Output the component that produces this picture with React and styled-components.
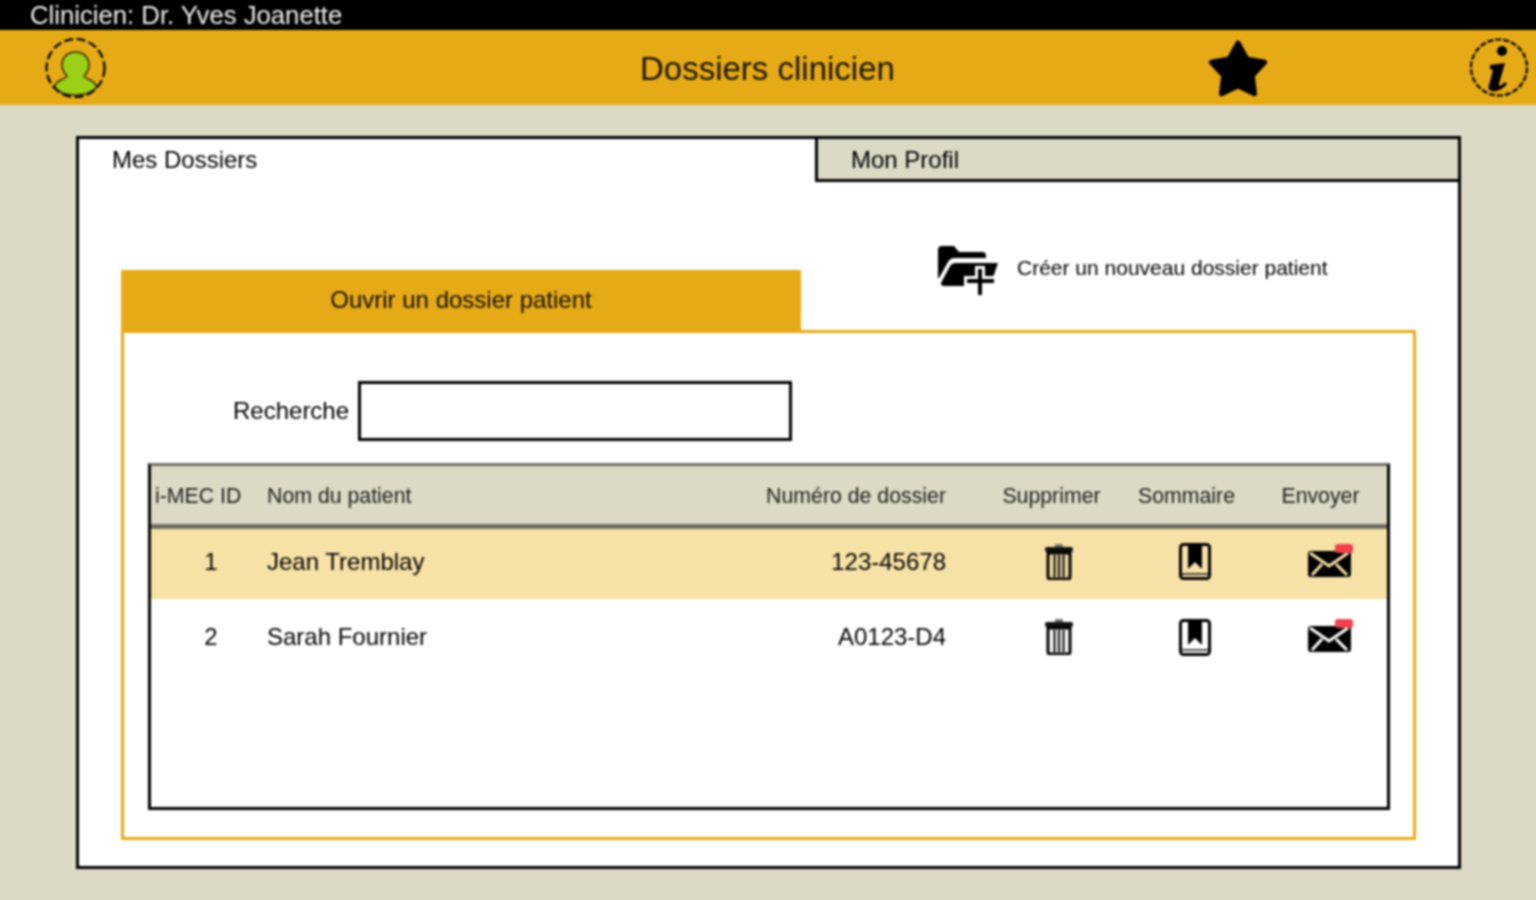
import React from "react";
import styled, { createGlobalStyle } from "styled-components";

const GlobalStyle = createGlobalStyle`
  html, body {
    margin: 0;
    padding: 0;
    background: #dcd9c6;
  }
  body {
    font-family: "Liberation Sans", Arial, sans-serif;
    color: #000;
  }
`;

const Frame = styled.div`
  width: 1536px;
  height: 900px;
  overflow: hidden;
`;

/* 10px wider than the window on each side so the blur doesn't fade at the edges */
const Page = styled.div`
  width: 1556px;
  height: 920px;
  margin: -10px;
  background: #dcd9c6;
  filter: blur(0.8px);
`;

const TopBar = styled.div`
  height: 30px;
  padding: 10px 0 0 40px;
  background: #000;
  color: #f0f0f0;
  font-size: 25.7px;
  line-height: 30px;
`;

const Header = styled.header`
  height: 75px;
  display: grid;
  grid-template-columns: 650px 568px 261px 1fr;
  align-items: center;
  background: #e6aa17;
`;

const HeaderIcon = styled.div`
  display: flex;
  align-items: center;
  height: 59px;
  padding-left: ${(p) => p.$left || 0}px;
`;

const Title = styled.h1`
  margin: 0;
  padding-top: 2px;
  font-size: 33px;
  font-weight: 400;
  color: #1a1504;
`;

const Main = styled.main`
  padding: 31px 0 0 86px;
`;

const Panel = styled.section`
  box-sizing: border-box;
  width: 1385px;
  height: 733px;
  border: 3px solid #000;
  background: #fff;
`;

const Tabs = styled.div`
  display: grid;
  grid-template-columns: 736px 1fr;
  height: 43px;
`;

const Tab = styled.div`
  box-sizing: border-box;
  display: flex;
  align-items: center;
  padding: 2px 0 0 33px;
  font-size: 24px;
  background: ${(p) => (p.$active ? "#fff" : "#dcd9c6")};
  border-left: ${(p) => (p.$active ? "none" : "3px solid #000")};
  border-bottom: 3px solid ${(p) => (p.$active ? "transparent" : "#000")};
`;

const Content = styled.div`
  padding: 63px 42px 0;
`;

const SectionTop = styled.div`
  display: flex;
  height: 85px;
`;

const SectionTab = styled.div`
  align-self: flex-end;
  width: 680px;
  height: 60px;
  display: flex;
  align-items: center;
  justify-content: center;
  background: #e6aa17;
  font-size: 24px;
  color: #141003;
`;

const CreateLink = styled.a`
  align-self: flex-start;
  display: flex;
  align-items: center;
  gap: 19px;
  margin-left: 136px;
  font-size: 21px;
  color: #000;
`;

const CreateText = styled.span`
  padding-bottom: 6px;
`;

const Box = styled.div`
  box-sizing: border-box;
  width: 1295px;
  height: 510px;
  padding: 48px 23px 0 24px;
  border: 3px solid #e6aa17;
`;

const SearchRow = styled.label`
  display: flex;
  align-items: center;
  gap: 9px;
  padding-left: 85px;
  font-size: 24px;
`;

const SearchInput = styled.input`
  box-sizing: border-box;
  width: 434px;
  height: 60px;
  border: 3px solid #000;
  border-radius: 0;
  background: #fff;
  outline: none;
`;

const Table = styled.div`
  box-sizing: border-box;
  height: 347px;
  margin-top: 22px;
  border: 3px solid #000;
  border-top-color: #6f6e62;
`;

const Row = styled.div`
  display: grid;
  grid-template-columns: 116px 433px 246px 173px 135px 133px;
  align-items: center;
`;

const HeadRow = styled(Row)`
  box-sizing: border-box;
  height: 63px;
  padding-top: 2px;
  background: #dcd9c6;
  border-bottom: 5px solid #6f6e62;
  font-size: 21.3px;
  color: #1e1e1a;
`;

const DataRow = styled(Row)`
  box-sizing: border-box;
  height: ${(p) => (p.$selected ? 70 : 76)}px;
  padding-bottom: ${(p) => (p.$selected ? 5 : 0)}px;
  background: ${(p) => (p.$selected ? "#f6e1a6" : "#fff")};
  font-size: 24px;
`;

const IdHead = styled.div`
  padding-left: 4px;
`;

const IdCell = styled.div`
  padding-left: 4px;
  text-align: center;
`;

const NumberCell = styled.div`
  text-align: right;
`;

const ActionHead = styled.div`
  padding-left: ${(p) => p.$left || 0}px;
  text-align: center;
`;

const ActionCell = styled.div`
  display: flex;
  justify-content: center;
  padding-left: ${(p) => p.$left || 0}px;
`;

function AvatarIcon() {
  return (
    <svg width="61" height="60" viewBox="0 0 61 60">
      <path
        d="M30.5 14C39 14 44 20 44 27C44 32 42 35 39 38C40 40 43 41 47 43C50 45 52 47 51 50C47 55 39 57 30.5 57C22 57 14 55 10 50C9 47 11 45 14 43C18 41 21 40 22 38C19 35 17 32 17 27C17 20 22 14 30.5 14Z"
        fill="#9bd016"
        stroke="#3a2c06"
        strokeWidth="1.6"
      />
      <circle cx="30.5" cy="30" r="29" fill="none" stroke="#000" strokeWidth="2.2" strokeDasharray="9 3.5" />
    </svg>
  );
}

function StarIcon() {
  return (
    <svg width="60" height="58" viewBox="0 0 60 58">
      <polygon
        points="30,4 38.8,19.9 56.6,23.3 44.3,36.6 46.5,54.7 30,47 13.5,54.7 15.7,36.6 3.4,23.3 21.2,19.9"
        fill="#000"
        stroke="#000"
        strokeWidth="5"
        strokeLinejoin="round"
      />
    </svg>
  );
}

function InfoIcon() {
  return (
    <svg width="60" height="59" viewBox="0 0 60 59">
      <circle cx="30" cy="29.5" r="28" fill="none" stroke="#000" strokeWidth="2.2" strokeDasharray="6 2" />
      <circle cx="33" cy="13" r="5" fill="#000" />
      <path
        d="M21 27L36 25L30 46C29.5 49 32 48 36 44L38 46C33 52 27 54 23 53C19 52 19 50 20 47L24 32L21 31Z"
        fill="#000"
      />
    </svg>
  );
}

function FolderPlusIcon() {
  return (
    <svg width="61" height="51" viewBox="0 0 61 51">
      <path d="M1 33V5Q1 1 5 1H17L22 7H45Q49 7 49 11V13H18C14 13 12 15 11 17L2 33Z" fill="#000" />
      <path d="M4 38L13 21Q15 18 19 18H61L54 38H7Q4 41 4 38Z" fill="#000" />
      <path d="M4 38H34V41H7Q4 41 4 38Z" fill="#000" />
      <path d="M43 21V51M27 36H60" stroke="#fff" strokeWidth="10" />
      <path d="M43 24V50M30 36H57" stroke="#000" strokeWidth="4" />
    </svg>
  );
}

function TrashIcon() {
  return (
    <svg width="28" height="36" viewBox="0 0 28 36">
      <rect x="10" y="0" width="8" height="4" fill="#777" />
      <rect x="0" y="3" width="28" height="5" rx="2" fill="#111" />
      <path d="M3 9H25V33Q25 35 23 35H5Q3 35 3 33Z" fill="none" stroke="#000" strokeWidth="3" />
      <path d="M9.5 11V33M14 11V33M18.5 11V33" stroke="#111" strokeWidth="2.2" />
    </svg>
  );
}

function BookIcon() {
  return (
    <svg width="32" height="37" viewBox="0 0 32 37">
      <rect x="1.5" y="1.5" width="29" height="34" rx="3" fill="none" stroke="#000" strokeWidth="3" />
      <path d="M9 2H23V26L16 19L9 26Z" fill="#000" />
      <path d="M2 31H30" stroke="#111" strokeWidth="1.5" />
    </svg>
  );
}

function MailIcon({ paper }) {
  return (
    <svg width="46" height="36" viewBox="0 0 46 36">
      <rect x="0" y="7" width="43" height="26" rx="3" fill="#000" />
      <path d="M2 9L21 22L40 9M4 31L14 20M39 31L28 20" fill="none" stroke={paper} strokeWidth="3" />
      <rect x="27" y="0" width="18" height="9" rx="3" fill="#f0404a" />
    </svg>
  );
}

function RowActions({ paper }) {
  return (
    <>
      <ActionCell $left={52}>
        <TrashIcon />
      </ActionCell>
      <ActionCell $left={16}>
        <BookIcon />
      </ActionCell>
      <ActionCell $left={21}>
        <MailIcon paper={paper} />
      </ActionCell>
    </>
  );
}

const patients = [
  { id: 1, name: "Jean Tremblay", file: "123-45678", selected: true },
  { id: 2, name: "Sarah Fournier", file: "A0123-D4", selected: false }
];

function App() {
  return (
    <Frame>
      <GlobalStyle />
      <Page>
        <TopBar>Clinicien: Dr. Yves Joanette</TopBar>
        <Header>
          <HeaderIcon $left={55}>
            <AvatarIcon />
          </HeaderIcon>
          <Title>Dossiers clinicien</Title>
          <HeaderIcon>
            <StarIcon />
          </HeaderIcon>
          <HeaderIcon>
            <InfoIcon />
          </HeaderIcon>
        </Header>
        <Main>
          <Panel>
            <Tabs>
              <Tab $active>Mes Dossiers</Tab>
              <Tab>Mon Profil</Tab>
            </Tabs>
            <Content>
              <SectionTop>
                <SectionTab>Ouvrir un dossier patient</SectionTab>
                <CreateLink>
                  <FolderPlusIcon />
                  <CreateText>Créer un nouveau dossier patient</CreateText>
                </CreateLink>
              </SectionTop>
              <Box>
                <SearchRow>
                  Recherche
                  <SearchInput type="text" />
                </SearchRow>
                <Table>
                  <HeadRow>
                    <IdHead>i-MEC ID</IdHead>
                    <div>Nom du patient</div>
                    <NumberCell>Numéro de dossier</NumberCell>
                    <ActionHead $left={38}>Supprimer</ActionHead>
                    <ActionHead>Sommaire</ActionHead>
                    <ActionHead>Envoyer</ActionHead>
                  </HeadRow>
                  {patients.map((p) => (
                    <DataRow key={p.id} $selected={p.selected}>
                      <IdCell>{p.id}</IdCell>
                      <div>{p.name}</div>
                      <NumberCell>{p.file}</NumberCell>
                      <RowActions paper={p.selected ? "#f6e1a6" : "#fff"} />
                    </DataRow>
                  ))}
                </Table>
              </Box>
            </Content>
          </Panel>
        </Main>
      </Page>
    </Frame>
  );
}

export default App;
